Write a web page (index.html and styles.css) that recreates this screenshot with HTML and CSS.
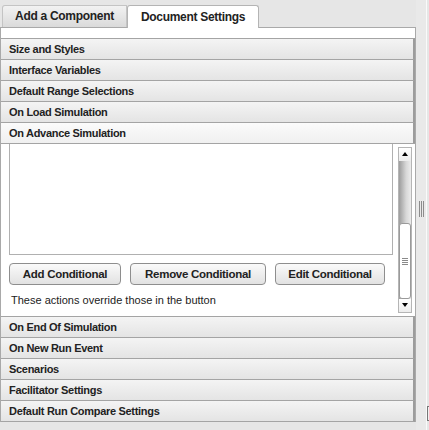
FILE: index.html
```html
<!DOCTYPE html>
<html lang="en">
<head>
    <meta charset="UTF-8">
    <title>Document Settings</title>
    <link rel="stylesheet" href="styles.css">
</head>
<body>
    <div class="app">
        <div class="main">
            <div class="tabs">
                <div class="tab">Add a Component</div>
                <div class="tab active">Document Settings</div>
            </div>

            <div class="panel">
                <div class="section">Size and Styles</div>
                <div class="section">Interface Variables</div>
                <div class="section">Default Range Selections</div>
                <div class="section">On Load Simulation</div>
                <div class="section open">On Advance Simulation</div>

                <!-- open section -->
                <div class="section-body">
                    <div class="body-inner">
                        <div class="list"></div>
                        <div class="buttons">
                            <button class="btn btn-add">Add Conditional</button>
                            <button class="btn btn-remove">Remove Conditional</button>
                            <button class="btn btn-edit">Edit Conditional</button>
                        </div>
                        <p class="note">These actions override those in the button</p>
                    </div>
                    <div class="scrollbar">
                        <div class="arrow up"></div>
                        <div class="track">
                            <div class="thumb"><span class="grip"></span></div>
                        </div>
                        <div class="arrow down"></div>
                    </div>
                </div>

                <div class="section">On End Of Simulation</div>
                <div class="section">On New Run Event</div>
                <div class="section">Scenarios</div>
                <div class="section">Facilitator Settings</div>
                <div class="section">Default Run Compare Settings</div>
            </div>
        </div>

        <div class="splitter">
            <span class="splitter-grip"></span>
        </div>
        <div class="edge">
            <div class="edge-box"></div>
        </div>
    </div>
</body>
</html>
```

FILE: styles.css
```css
body {
    margin: 0;
    background-color: #e6e6e6;
    font-family: "Liberation Sans", Arial, sans-serif;
    color: #222;
}

.app {
    display: flex;
    height: 430px;
}

.main {
    width: 416px;
}

/* Tabs */
.tabs {
    display: flex;
    align-items: flex-end;
    height: 27px;
    padding-left: 2px;
    box-sizing: border-box;
}

.tab {
    height: 22px;
    width: 125px;
    box-sizing: border-box;
    border: 1px solid #c4c4c4;
    border-bottom: none;
    border-radius: 3px 0 0 0;
    background: linear-gradient(#f2f2f2, #dadada);
    font-size: 12px;
    font-weight: bold;
    letter-spacing: -0.3px;
    line-height: 21px;
    text-align: center;
    color: #222;
}

.tab.active {
    height: 23px;
    width: 132px;
    background: #fff;
    border-color: #b4b4b4;
    border-radius: 3px 3px 0 0;
    line-height: 23px;
    position: relative;
    top: 1px;
}

/* Accordion panel */
.panel {
    border: 1px solid #a9a9a9;
    border-bottom: none;
    background-color: #fff;
    padding-top: 10px;
    width: 416px;
    box-sizing: border-box;
}

.section {
    height: 21px;
    box-sizing: border-box;
    border-top: 1px solid #a4a4a4;
    border-right: 2px solid #9c9c9c;
    background: linear-gradient(#f4f4f4, #e4e4e4);
    font-size: 11px;
    font-weight: bold;
    letter-spacing: -0.3px;
    line-height: 20px;
    padding-left: 8px;
    color: #222;
}

.section:last-child {
    border-bottom: 1px solid #a4a4a4;
    height: 22px;
}

.section.open {
    background: linear-gradient(#fbfbfb, #f0f0f0);
}

.section-body {
    display: flex;
    height: 173px;
    border-top: 1px solid #a4a4a4;
    box-sizing: border-box;
    background-color: #fff;
}

.body-inner {
    flex: 1;
    padding-left: 8px;
}

.list {
    height: 110px;
    border: 1px solid #b0b0b0;
    border-top: none;
    margin-right: 5px;
}

.buttons {
    display: flex;
    gap: 9px;
    margin-top: 8px;
}

.btn {
    height: 22px;
    padding: 0;
    border: 1px solid #8e8e8e;
    border-radius: 4px;
    background: linear-gradient(#fafafa, #e2e2e2);
    font-family: "Liberation Sans", Arial, sans-serif;
    font-size: 11.5px;
    font-weight: bold;
    letter-spacing: -0.3px;
    color: #222;
}

.btn-add {
    width: 112px;
}

.btn-remove {
    width: 136px;
}

.btn-edit {
    width: 110px;
}

.note {
    margin: 8px 0 0 2px;
    font-size: 11px;
    line-height: 14px;
    color: #222;
}

/* Inner scrollbar */
.scrollbar {
    width: 14px;
    margin: 3px 3px 3px 0;
    display: flex;
    flex-direction: column;
    border: 1px solid #b5b5b5;
    box-sizing: border-box;
    background-color: #f4f4f4;
}

.arrow {
    height: 13px;
    position: relative;
    background: linear-gradient(#ffffff, #ececec);
}

.arrow::after {
    content: "";
    position: absolute;
    left: 3px;
    top: 4px;
    border-left: 3px solid transparent;
    border-right: 3px solid transparent;
}

.arrow.up::after {
    border-bottom: 4px solid #000;
}

.arrow.down::after {
    border-top: 4px solid #000;
}

.track {
    flex: 1;
    display: flex;
    flex-direction: column;
    justify-content: flex-end;
    background: linear-gradient(to right, #9c9c9c, #d8d8d8 60%, #ececec);
}

.thumb {
    height: 74px;
    border: 1px solid #9a9a9a;
    border-radius: 3px;
    background: #fff;
    display: flex;
    align-items: center;
    justify-content: center;
}

.grip {
    width: 6px;
    height: 7px;
    background: repeating-linear-gradient(#8a8a8a 0 1px, transparent 1px 2px);
}

/* Splitter at the right */
.splitter {
    width: 11px;
    display: flex;
    align-items: center;
    justify-content: center;
    background-color: #e9e9e9;
    padding-bottom: 12px;
    box-sizing: border-box;
}

.splitter-grip {
    width: 5px;
    height: 16px;
    background: repeating-linear-gradient(to right, #8c8c8c 0 1px, transparent 1px 2px);
}

.edge {
    width: 2px;
    border-left: 1px solid #fafafa;
    position: relative;
}

.edge-box {
    position: absolute;
    left: 0;
    top: 406px;
    width: 2px;
    height: 15px;
    border: 1px solid #777;
    border-right: none;
    background: #f0f0f0;
    box-sizing: border-box;
}
```
